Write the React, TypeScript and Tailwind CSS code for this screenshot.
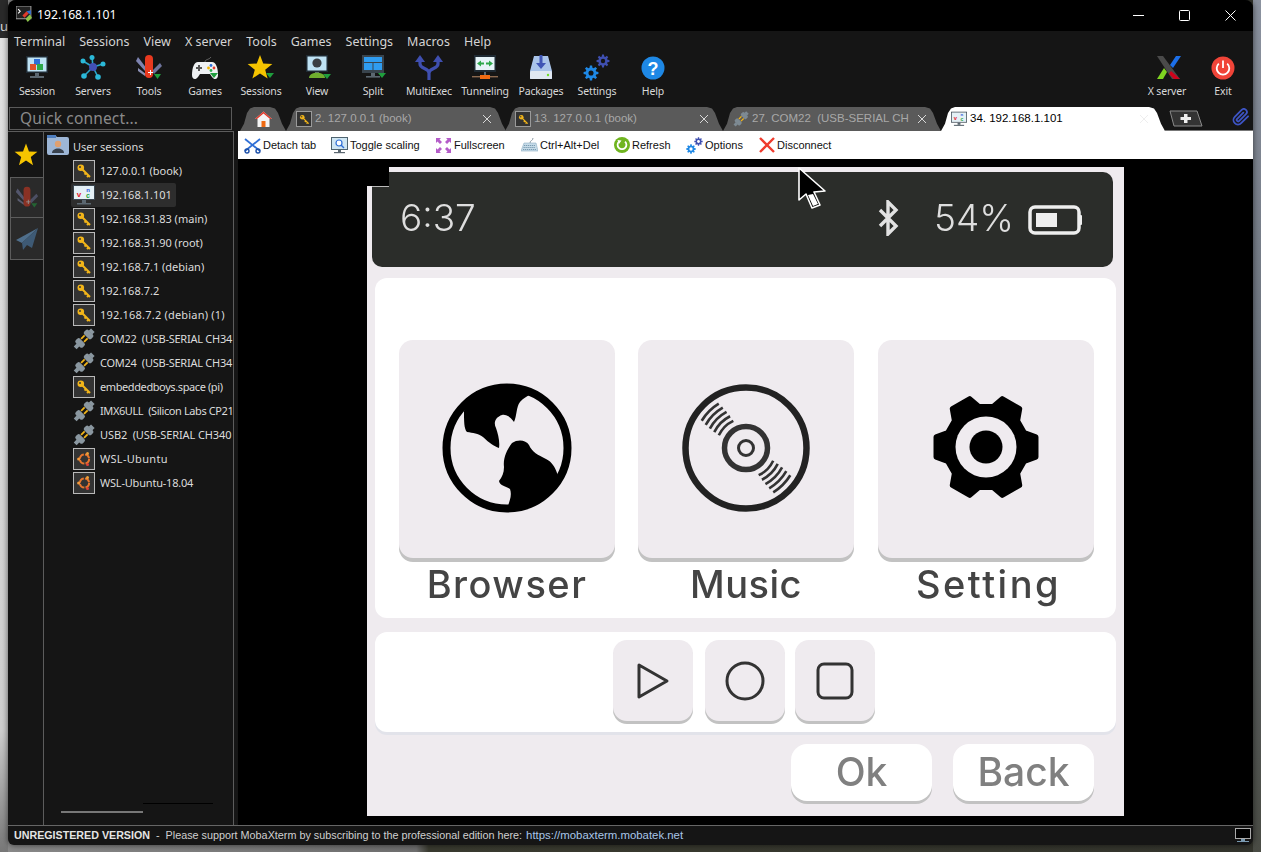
import React from "react";

const pt = (cx: number, cy: number, r: number, deg: number) => {
  const a = (deg * Math.PI) / 180;
  return [+(cx + r * Math.cos(a)).toFixed(2), +(cy + r * Math.sin(a)).toFixed(2)];
};

const gearPath = (c: number, ro: number, ri: number, n: number, start = 0) => {
  const step = 360 / n;
  const out: string[] = [];
  for (let i = 0; i < n; i++) {
    const t = start + i * step;
    const w = step * 0.19;
    const v = step * 0.34;
    [pt(c, c, ri, t - v), pt(c, c, ro, t - w), pt(c, c, ro, t + w), pt(c, c, ri, t + v)].forEach((p) => out.push(p.join(",")));
  }
  return "M" + out.join(" L") + " Z";
};

const arc = (c: number, r: number, a1: number, a2: number) => {
  const [x1, y1] = pt(c, c, r, a1);
  const [x2, y2] = pt(c, c, r, a2);
  return `M${x1} ${y1} A${r} ${r} 0 0 1 ${x2} ${y2}`;
};

const starPts = (c: number, cy: number, r: number) => {
  const p: string[] = [];
  for (let i = 0; i < 10; i++) p.push(pt(c, cy, i % 2 ? r * 0.42 : r, -90 + i * 36).join(","));
  return p.join(" ");
};

const Tri = () => <polygon points="19,19 27,19 23,24" fill="#1f9e3d" />;

const Svg = ({ children, s = 28 }: { children: React.ReactNode; s?: number }) => (
  <svg width={s} height={s} viewBox="0 0 28 28" className="block">{children}</svg>
);

const MiniGear = ({ x, y, r, fill, bg = "#151515" }: { x: number; y: number; r: number; fill: string; bg?: string }) => (
  <g transform={`translate(${x - r} ${y - r}) scale(${r / 10})`}>
    <path d={gearPath(10, 10, 7.2, 8)} fill={fill} />
    <circle cx="10" cy="10" r="3.4" fill={bg} />
  </g>
);

const Icons: Record<string, React.ReactNode> = {
  Session: (
    <Svg>
      <rect x="3" y="2" width="22" height="17" fill="#1f2a33" />
      <rect x="4.5" y="3.5" width="19" height="14" fill="#bfe3f5" />
      <rect x="11" y="5" width="6" height="6" fill="#2f6fd6" />
      <rect x="7" y="10" width="6" height="6" fill="#e0522a" />
      <rect x="14" y="10" width="6" height="6" fill="#2da84a" />
      <rect x="12" y="19" width="4" height="3" fill="#5b6770" />
      <rect x="7" y="22" width="14" height="2" fill="#5b6770" />
    </Svg>
  ),
  Servers: (
    <Svg>
      <g stroke="#2aa7c9" strokeWidth="1.6">
        <line x1="14" y1="13" x2="13" y2="3" />
        <line x1="14" y1="13" x2="4" y2="7" />
        <line x1="14" y1="13" x2="24" y2="10" />
        <line x1="14" y1="13" x2="5" y2="22" />
        <line x1="14" y1="13" x2="19" y2="23" />
      </g>
      <g fill="#2bb9d8">
        <circle cx="13" cy="3.5" r="2.5" /><circle cx="4" cy="7" r="2.5" /><circle cx="24" cy="10" r="2.5" />
        <circle cx="5" cy="22" r="2.8" /><circle cx="19" cy="23" r="2.8" />
      </g>
      <circle cx="14" cy="13" r="4" fill="#4150b5" />
    </Svg>
  ),
  Tools: (
    <Svg>
      <path d="M3 3 L12 15 L10 17 L1 7 Z" fill="#7d83b0" />
      <path d="M25 9 L17 17 L19 20 L27 12 Z" fill="#6e749c" />
      <path d="M3 14 L11 20 L10 22 L3 17 Z" fill="#8b8fb4" />
      <rect x="10" y="1" width="8" height="23" rx="4" fill="#e8391f" />
      <path d="M13 18h2v-2h1v2h2v1h-2v2h-1v-2h-2z" fill="#fff" />
      <polygon points="19,20 26,20 22.5,25" fill="#1f9e3d" />
    </Svg>
  ),
  Games: (
    <Svg>
      <path d="M7 8 H21 C25 8 27 14 27 21 C27 26 23 26 21 23 L19 20 H9 L7 23 C5 26 1 26 1 21 C1 14 3 8 7 8 Z" fill="#eef0f2" />
      <path d="M14 8 C14 5 18 6 20 3" stroke="#666" strokeWidth="1" fill="none" />
      <path d="M5 13h2v-2h2v2h2v2H9v2H7v-2H5z" fill="#555" />
      <circle cx="20" cy="11.5" r="1.4" fill="#2f6fd6" /><circle cx="23" cy="14" r="1.4" fill="#e0392a" />
      <circle cx="17.5" cy="14" r="1.4" fill="#f1b400" /><circle cx="20" cy="16.5" r="1.4" fill="#2da84a" />
      <Tri />
    </Svg>
  ),
  Sessions: (
    <Svg>
      <polygon points={starPts(13, 14, 13)} fill="#f5c400" />
      <Tri />
    </Svg>
  ),
  View: (
    <Svg>
      <rect x="3" y="1" width="22" height="17" fill="#1f2a33" />
      <rect x="4.5" y="2.5" width="19" height="14" fill="#bfe3f5" />
      <circle cx="14" cy="9" r="4.6" fill="#3a3f44" />
      <rect x="12" y="18" width="4" height="3" fill="#5b6770" />
      <path d="M6 24 C6 17 22 17 22 24 Z" fill="#6fae2e" />
      <polygon points="20,20 28,20 24,25" fill="#1f9e3d" />
    </Svg>
  ),
  Split: (
    <Svg>
      <rect x="3" y="1" width="22" height="18" fill="#39444d" />
      <rect x="5" y="3" width="18" height="5" fill="#2f9cf0" />
      <rect x="5" y="9" width="8.5" height="7" fill="#2f9cf0" />
      <rect x="14.5" y="9" width="8.5" height="7" fill="#2f9cf0" />
      <rect x="12" y="19" width="4" height="3" fill="#5b6770" />
      <rect x="7" y="22" width="14" height="1.6" fill="#5b6770" />
      <polygon points="19,19 27,19 23,24" fill="#1f9e3d" />
    </Svg>
  ),
  MultiExec: (
    <Svg>
      <path d="M5 6 V10 C5 15 14 14 14 19 V26 M23 6 V10 C23 15 14 14 14 19" stroke="#3f4fb0" strokeWidth="3.2" fill="none" />
      <polygon points="5,1 10,8 0,8" fill="#3f4fb0" />
      <polygon points="23,1 28,8 18,8" fill="#3f4fb0" />
    </Svg>
  ),
  Tunneling: (
    <Svg>
      <rect x="3" y="1" width="22" height="17" fill="#1f2a33" />
      <rect x="4.5" y="3" width="19" height="13" fill="#e6f3f8" />
      <path d="M6 9.5 L10 6.5 V8.5 H13 V10.5 H10 V12.5 Z M22 9.5 L18 6.5 V8.5 H15 V10.5 H18 V12.5 Z" fill="#2da84a" />
      <rect x="13" y="18" width="2" height="3" fill="#5b6770" />
      <rect x="1" y="22" width="26" height="1.4" fill="#8c6a50" />
      <rect x="9" y="21" width="10" height="4" fill="#f06a12" />
    </Svg>
  ),
  Packages: (
    <Svg>
      <path d="M7 2 H21 L25 17 V25 H3 V17 Z" fill="#a9c4ea" />
      <rect x="3" y="17" width="22" height="8" rx="1.5" fill="#e0e8f2" />
      <circle cx="21" cy="21" r="1.2" fill="#6fdc2e" />
      <path d="M12.5 1 H15.5 V9 H19 L14 15 L9 9 H12.5 Z" fill="#3f55b5" />
    </Svg>
  ),
  Settings: (
    <Svg>
      <MiniGear x={8} y={19} r={7.5} fill="#1e88e5" />
      <MiniGear x={20} y={7} r={6.5} fill="#3f4fb0" />
    </Svg>
  ),
  Help: (
    <Svg>
      <circle cx="14" cy="14" r="11.5" fill="#1e88e5" />
      <text x="14" y="20.5" textAnchor="middle" fontSize="18" fontWeight="700" fontFamily="'Liberation Sans', sans-serif" fill="#fff">?</text>
    </Svg>
  ),
  "X server": (
    <Svg>
      <polygon points="4,2 10,2 27,25 19,25" fill="#4a4a4a" />
      <polygon points="4,25 11,14 14,18 10,25" fill="#7ed321" />
      <polygon points="17,11 23,2 28,2 20,14" fill="#1c6fe8" />
      <polygon points="18,17 27,25 21,25 16,20" fill="#d0021b" />
    </Svg>
  ),
  Exit: (
    <Svg>
      <circle cx="14" cy="14" r="11.5" fill="#f04438" />
      <path d="M9.8 9.6 A6.3 6.3 0 1 0 18.2 9.6" stroke="#fff" strokeWidth="1.8" fill="none" />
      <line x1="14" y1="6.5" x2="14" y2="14" stroke="#fff" strokeWidth="1.8" />
    </Svg>
  ),
};

const ToolItem = ({ name }: { name: string }) => (
  <div className="flex w-[56px] shrink-0 flex-col items-center">
    <div className="flex h-[27px] items-center justify-center">{Icons[name]}</div>
    <span className="mt-[2px] whitespace-nowrap text-[10.5px] leading-[16px] tracking-[-0.15px] text-[#d8d8d8]">{name}</span>
  </div>
);

const KeyIcon = ({ s = 16 }: { s?: number }) => (
  <svg width={s} height={s} viewBox="0 0 16 16">
    <circle cx="4.8" cy="4.8" r="3.3" fill="#f2b519" />
    <circle cx="4" cy="4" r="1" fill="#3a3a3a" />
    <path d="M6 6 L14 14 M10 10 L8.5 11.5 M12.5 12.5 L11 14" stroke="#f2b519" strokeWidth="2" />
  </svg>
);

const KeyBox = () => (
  <div className="flex h-[22px] w-[22px] items-center justify-center border border-[#b9b9b9] bg-[#333]">
    <KeyIcon />
  </div>
);

const UbuntuBox = () => (
  <div className="flex h-[22px] w-[22px] items-center justify-center border border-[#b9b9b9] bg-[#333]">
    <svg width="16" height="16" viewBox="0 0 16 16">
      <circle cx="8.5" cy="8" r="4.6" fill="none" stroke="#e8762d" strokeWidth="2" strokeDasharray="6 1.2" />
      <circle cx="2.6" cy="8" r="1.5" fill="#f39a3c" />
      <circle cx="11.5" cy="2.6" r="1.5" fill="#f0a13a" />
      <circle cx="11.5" cy="13.4" r="1.5" fill="#e0403a" />
    </svg>
  </div>
);

const PlugIcon = ({ s = 22, c = "#8a97a0" }: { s?: number; c?: string }) => (
  <svg width={s} height={s} viewBox="0 0 22 22">
    <g transform="rotate(45 11 11)">
      <rect x="6" y="1.5" width="10" height="6" rx="2" fill={c} />
      <rect x="8.5" y="-1.5" width="5" height="3.5" fill={c} />
      <rect x="6" y="13.5" width="10" height="6" rx="2" fill={c} />
      <rect x="9" y="19" width="4" height="4.5" fill={c} />
      <rect x="8" y="8" width="1.8" height="5" fill="#f2b519" />
      <rect x="12.2" y="8" width="1.8" height="5" fill="#f2b519" />
    </g>
  </svg>
);

const VncIcon = ({ s = 22 }: { s?: number }) => (
  <svg width={s} height={s} viewBox="0 0 22 22" className="block">
    <rect x="0" y="1" width="22" height="15" fill="#3a4650" />
    <rect x="1" y="2" width="20" height="13" fill="#e4f0f6" />
    <text x="6" y="13" textAnchor="middle" fontSize="8" fontWeight="700" fontFamily="'Liberation Sans', sans-serif" fill="#e2172a">v</text>
    <text x="15" y="7.5" textAnchor="middle" fontSize="6" fontWeight="700" fontFamily="'Liberation Sans', sans-serif" fill="#2a55d8">n</text>
    <text x="15" y="14" textAnchor="middle" fontSize="7" fontWeight="700" fontFamily="'Liberation Sans', sans-serif" fill="#1ea33a">c</text>
    <rect x="9" y="16" width="4" height="3" fill="#5b6770" />
    <rect x="4" y="19" width="14" height="1.5" fill="#5b6770" />
  </svg>
);

type TreeKind = "key" | "vnc" | "plug" | "ubuntu";
const treeRows: { kind: TreeKind; label: string; selected?: boolean; track?: string }[] = [
  { kind: "key", label: "127.0.0.1 (book)" },
  { kind: "vnc", label: "192.168.1.101", selected: true },
  { kind: "key", label: "192.168.31.83 (main)" },
  { kind: "key", label: "192.168.31.90 (root)" },
  { kind: "key", label: "192.168.7.1 (debian)" },
  { kind: "key", label: "192.168.7.2" },
  { kind: "key", label: "192.168.7.2 (debian) (1)", track: "tracking-[0.2px]" },
  { kind: "plug", label: "COM22  (USB-SERIAL CH34", track: "tracking-[-0.25px]" },
  { kind: "plug", label: "COM24  (USB-SERIAL CH34", track: "tracking-[-0.25px]" },
  { kind: "key", label: "embeddedboys.space (pi)", track: "tracking-[-0.4px]" },
  { kind: "plug", label: "IMX6ULL  (Silicon Labs CP21", track: "tracking-[-0.4px]" },
  { kind: "plug", label: "USB2  (USB-SERIAL CH340", track: "tracking-[-0.1px]" },
  { kind: "ubuntu", label: "WSL-Ubuntu", track: "tracking-[0.3px]" },
  { kind: "ubuntu", label: "WSL-Ubuntu-18.04", track: "tracking-[-0.2px]" },
];

const TreeIcon = ({ kind }: { kind: TreeKind }) =>
  kind === "key" ? <KeyBox /> : kind === "vnc" ? <VncIcon /> : kind === "plug" ? <PlugIcon /> : <UbuntuBox />;

const tabShape =
  "[clip-path:polygon(0_100%,4px_70%,7px_25%,10px_6%,14px_0,calc(100%_-_16px)_0,calc(100%_-_11px)_6%,calc(100%_-_8px)_25%,calc(100%_-_4px)_70%,100%_100%)]";

const Tab = ({ icon, label, w }: { icon: React.ReactNode; label: string; w: string }) => (
  <div className={`relative flex h-[24px] shrink-0 items-center overflow-hidden bg-[#5a5a5a] pl-[8px] pr-[14px] ${w} ${tabShape}`}>
    <div className="ml-[2px] flex h-[16px] w-[16px] shrink-0 items-center justify-center">{icon}</div>
    <span className="ml-[3px] min-w-0 flex-1 overflow-hidden whitespace-pre font-['Liberation_Sans'] text-[11.5px] text-[#a8a8a8]">{label}</span>
    <svg width="10" height="10" viewBox="0 0 10 10" className="ml-[6px] shrink-0">
      <path d="M1 1 L9 9 M9 1 L1 9" stroke="#d8d8d8" strokeWidth="1" />
    </svg>
  </div>
);

const actions: { label: string; w: string; icon: React.ReactNode }[] = [
  {
    label: "Detach tab",
    w: "w-[87px]",
    icon: (
      <svg width="17" height="17" viewBox="0 0 17 17">
        <path d="M1 2 L16 14" stroke="#2f6fd6" strokeWidth="1.8" />
        <path d="M16 2 L1 14" stroke="#2f6fd6" strokeWidth="1.8" />
        <circle cx="3" cy="14" r="2" fill="none" stroke="#1c4fa8" strokeWidth="1.4" />
        <circle cx="14" cy="14" r="2" fill="none" stroke="#1c4fa8" strokeWidth="1.4" />
      </svg>
    ),
  },
  {
    label: "Toggle scaling",
    w: "w-[104px]",
    icon: (
      <svg width="17" height="17" viewBox="0 0 17 17">
        <rect x="0.5" y="0.5" width="16" height="12" fill="#cfe6f3" stroke="#4f6470" />
        <circle cx="8" cy="6" r="3" fill="#fff" stroke="#2f6fd6" strokeWidth="1.2" />
        <line x1="10" y1="8" x2="13" y2="11" stroke="#2f6fd6" strokeWidth="1.4" />
        <rect x="7" y="13" width="3" height="2" fill="#5b6770" />
        <rect x="3" y="15" width="11" height="1.2" fill="#5b6770" />
      </svg>
    ),
  },
  {
    label: "Fullscreen",
    w: "w-[86px]",
    icon: (
      <svg width="15" height="15" viewBox="0 0 15 15" fill="#b45cc8">
        <polygon points="0,0 5,0 3.5,1.5 6,4 4,6 1.5,3.5 0,5" />
        <polygon points="15,0 10,0 11.5,1.5 9,4 11,6 13.5,3.5 15,5" />
        <polygon points="0,15 5,15 3.5,13.5 6,11 4,9 1.5,11.5 0,10" />
        <polygon points="15,15 10,15 11.5,13.5 9,11 11,9 13.5,11.5 15,10" />
      </svg>
    ),
  },
  {
    label: "Ctrl+Alt+Del",
    w: "w-[92px]",
    icon: (
      <svg width="17" height="17" viewBox="0 0 17 17">
        <path d="M12 1 C12 4 9 3 9 6" stroke="#8a97a0" fill="none" />
        <path d="M3 6 H15 L17 14 H0 Z" fill="#c6dbe8" stroke="#8fb0c4" strokeWidth="0.6" />
        <path d="M3 8.5h11M2.5 10.5h12M2 12.5h13" stroke="#6f93aa" strokeWidth="0.9" strokeDasharray="1.3 0.7" />
      </svg>
    ),
  },
  {
    label: "Refresh",
    w: "w-[73px]",
    icon: (
      <svg width="16" height="16" viewBox="0 0 16 16">
        <circle cx="8" cy="8" r="8" fill="#6fb41f" />
        <path d="M5 4.6 A4.4 4.4 0 1 0 11 4.6" stroke="#fff" strokeWidth="1.8" fill="none" />
        <polygon points="3.5,3 7.5,3.4 5,7" fill="#fff" />
      </svg>
    ),
  },
  {
    label: "Options",
    w: "w-[72px]",
    icon: (
      <svg width="17" height="17" viewBox="0 0 17 17">
        <MiniGear x={5} y={12} r={4.8} fill="#1e88e5" bg="#ffffff" />
        <MiniGear x={12.5} y={4.5} r={4.2} fill="#3f4fb0" bg="#ffffff" />
      </svg>
    ),
  },
  {
    label: "Disconnect",
    w: "w-[80px]",
    icon: (
      <svg width="16" height="16" viewBox="0 0 16 16">
        <path d="M1 1 L15 15 M15 1 L1 15" stroke="#ef3b2d" strokeWidth="2.4" />
      </svg>
    ),
  },
];

const Globe = () => (
  <svg width="130" height="130" viewBox="0 0 130 130">
    <circle cx="65" cy="65" r="60.5" fill="#efebef" stroke="#000" strokeWidth="8" />
    <path
      d="M22 28 C22 38 22 46 25 49 C31 50 36 50 41 54 C47 60 52 63 57 65 C58 58 56 51 54 45 C51 39 54 34 60 32 C66 31 70 36 72 39 C75 33 74 24 78 19 C81 15 85 14 90 10 C80 3 60 0 44 6 C34 11 27 19 22 28 Z"
      fill="#000"
    />
    <path
      d="M57 98 C60 94 62 90 62 84 C61 76 64 68 70 60 C76 56 84 57 87 62 C90 69 96 72 104 76 C110 79 113 84 115 90 C118 94 110 110 98 117 C88 123 76 125 66 123 C68 117 70 112 68 106 C64 103 58 103 57 98 Z"
      fill="#000"
    />
  </svg>
);

const Disc = () => (
  <svg width="130" height="130" viewBox="0 0 130 130">
    <circle cx="65" cy="65" r="60.5" fill="none" stroke="#222" strokeWidth="6.5" />
    <circle cx="65" cy="65" r="21.5" fill="none" stroke="#333" strokeWidth="5.5" />
    <circle cx="65" cy="65" r="7.5" fill="none" stroke="#333" strokeWidth="3" />
    {[30, 35.5, 41, 46.5, 52].map((r) => (
      <g key={r} stroke="#333" strokeWidth="2.6" fill="none">
        <path d={arc(65, r, 205 + (r - 30) * 0.3, 245 - (r - 30) * 0.3)} />
        <path d={arc(65, r, 25 + (r - 30) * 0.3, 65 - (r - 30) * 0.3)} />
      </g>
    ))}
  </svg>
);

const Cog = () => (
  <svg width="110" height="110" viewBox="0 0 110 110">
    <path d={gearPath(55, 51, 41, 6)} fill="#000" stroke="#000" strokeWidth="5" strokeLinejoin="round" />
    <circle cx="55" cy="55" r="30.5" fill="#efebef" />
    <circle cx="55" cy="55" r="16.5" fill="#000" />
  </svg>
);

const AppBtn = ({ label, icon, mr, pad, track }: { label: string; icon: React.ReactNode; mr: string; pad: string; track: string }) => (
  <div className={`flex w-[216px] shrink-0 flex-col items-center ${mr}`}>
    <div className={`flex h-[218px] w-full items-start justify-center rounded-[14px] bg-[#efebef] shadow-[0_4px_0_#c2c2c2] ${pad}`}>{icon}</div>
    <span className={`mt-[1px] text-[38px] font-medium leading-[50px] text-[#444] ${track}`}>{label}</span>
  </div>
);

const SmallBtn = ({ children, mr }: { children: React.ReactNode; mr: string }) => (
  <div className={`flex h-[81px] w-[80px] items-center justify-center rounded-[14px] bg-[#efebef] shadow-[0_3px_0_#c2c2c2] ${mr}`}>{children}</div>
);

const WideBtn = ({ label }: { label: string }) => (
  <div className="flex h-[57px] w-[141px] items-center justify-center rounded-[16px] bg-white text-[39px] font-medium text-[#808080] shadow-[0_3px_0_#c2c2c2]">{label}</div>
);

export default function App() {
  const left = ["Session", "Servers", "Tools", "Games", "Sessions", "View", "Split", "MultiExec", "Tunneling", "Packages", "Settings", "Help"];
  const menu = ["Terminal", "Sessions", "View", "X server", "Tools", "Games", "Settings", "Macros", "Help"];
  const boxedKey = (
    <div className="flex h-[16px] w-[16px] items-center justify-center border border-[#9a9a9a] bg-[#333]">
      <KeyIcon s={11} />
    </div>
  );
  return (
    <div className="relative h-[852px] w-[1261px] overflow-hidden bg-[linear-gradient(90deg,#8a8a8a_0,#6f6f6f_33%,#3a3b30_34%,#34352d_100%)] font-['Noto_Sans']">
      {/* desktop behind the window */}
      <div className="absolute left-0 top-[38px] h-[814px] w-[8px] bg-[linear-gradient(180deg,#e2e2e2,#cfcfcf_85%,#777)]" />
      <div className="absolute left-0 top-0 h-[38px] w-[8px] bg-[#2a2a2a] text-[13px] leading-[52px] text-[#ddd]">u</div>
      <div className="absolute right-0 top-0 h-[852px] w-[8px] bg-[linear-gradient(180deg,#8c93a0,#6f7680_40%,#4a4c45)]" />

      <div className="absolute left-[8px] top-0 flex h-[845px] w-[1245px] flex-col overflow-hidden rounded-t-[8px] rounded-b-[6px] bg-[#151515] shadow-[0_0_6px_rgba(0,0,0,0.6)]">
        {/* title bar */}
        <div className="flex h-[31px] shrink-0 items-center bg-black pl-[8px]">
          <svg width="17" height="17" viewBox="0 0 16 16" className="mt-[-2px]">
            <rect x="0" y="0" width="14" height="12" fill="#222" stroke="#999" />
            <path d="M2 3 L4 5 L2 7" stroke="#fff" fill="none" />
            <polygon points="6,9 10,5 12,7 8,11" fill="#e0392a" />
            <polygon points="10,5 14,4 14,8 12,7" fill="#2f6fd6" />
            <polygon points="9,12 13,8 15,11 11,15" fill="#8bc34a" />
          </svg>
          <span className="ml-[4px] text-[12.2px] text-white">192.168.1.101</span>
          <div className="ml-auto flex items-center">
            <div className="flex h-[31px] w-[46px] items-center justify-center">
              <svg width="11" height="11" viewBox="0 0 11 11"><line x1="0" y1="5.5" x2="11" y2="5.5" stroke="#fff" /></svg>
            </div>
            <div className="flex h-[31px] w-[46px] items-center justify-center">
              <svg width="11" height="11" viewBox="0 0 11 11"><rect x="0.5" y="0.5" width="10" height="10" rx="1" fill="none" stroke="#fff" /></svg>
            </div>
            <div className="flex h-[31px] w-[46px] items-center justify-center">
              <svg width="11" height="11" viewBox="0 0 11 11"><path d="M0.5 0.5 L10.5 10.5 M10.5 0.5 L0.5 10.5" stroke="#fff" /></svg>
            </div>
          </div>
        </div>

        {/* menu */}
        <div className="flex h-[22px] shrink-0 items-center gap-[14px] pl-[6px] text-[12.5px] text-[#d4d4d4]">
          {menu.map((m, i) => (
            <span key={i}>{m}</span>
          ))}
        </div>

        {/* toolbar */}
        <div className="flex h-[54px] shrink-0 items-start pl-[1px] pt-[1px]">
          {left.map((n) => (
            <ToolItem key={n} name={n} />
          ))}
          <div className="ml-auto flex pr-[2px]">
            <ToolItem name="X server" />
            <ToolItem name="Exit" />
          </div>
        </div>

        {/* quick connect + tabs */}
        <div className="flex h-[24px] shrink-0 items-start">
          <div className="ml-[1px] flex h-[23px] w-[223px] shrink-0 items-center border border-[#5a5a5a] pl-[10px] text-[15.5px] tracking-[0.15px] text-[#8a8a8a]">Quick connect...</div>
          <div className="ml-[8px] flex min-w-0 flex-1 items-start">
            <div className={`flex h-[24px] w-[46px] shrink-0 items-center justify-center bg-[#5a5a5a] ${tabShape}`}>
              <svg width="17" height="17" viewBox="0 0 17 17">
                <polygon points="8.5,0.5 17,8 14.5,8 14.5,16 2.5,16 2.5,8 0,8" fill="#f4f4f4" />
                <polygon points="8.5,0.5 17,8 15,8 8.5,2.5 2,8 0,8" fill="#e0392a" />
                <rect x="6.5" y="10" width="4" height="6" fill="#f06a12" />
              </svg>
            </div>
            <Tab icon={boxedKey} label="2. 127.0.0.1 (book)" w="w-[220px]" />
            <Tab icon={boxedKey} label="13. 127.0.0.1 (book)" w="w-[218px] -ml-[1px]" />
            <Tab icon={<PlugIcon s={16} c="#7d8a93" />} label="27. COM22  (USB-SERIAL CH" w="w-[218px]" />
            <div className={`flex h-[24px] w-[224px] shrink-0 items-center bg-white pl-[10px] pr-[16px] ${tabShape}`}>
              <VncIcon s={16} />
              <span className="ml-[3px] flex-1 whitespace-nowrap font-['Liberation_Sans'] text-[11.5px] text-black">34. 192.168.1.101</span>
              <svg width="10" height="10" viewBox="0 0 10 10"><path d="M1 1 L9 9 M9 1 L1 9" stroke="#eee" /></svg>
            </div>
            <div className="flex h-[24px] min-w-0 flex-1 items-start border-b border-[#777] pl-[4px]">
              <svg width="34" height="17" viewBox="0 0 34 17" className="mt-[3px] shrink-0">
                <polygon points="1,1 28,1 33,16 5,16" fill="#333" stroke="#8a8a8a" />
                <path d="M15 4h3.5v3h3.5v3h-3.5v3H15v-3h-3.5V7H15z" fill="#eee" />
              </svg>
              <svg width="18" height="18" viewBox="0 0 24 24" className="ml-[29px] mt-[1px] shrink-0" fill="none" stroke="#3d54c4" strokeWidth="2.4" strokeLinecap="round">
                <path d="M21.4 11.1 12.2 20.3a6 6 0 0 1-8.5-8.5l9.2-9.2a4 4 0 0 1 5.7 5.7l-9.2 9.2a2 2 0 0 1-2.8-2.8l8.5-8.5" />
              </svg>
            </div>
          </div>
        </div>

        {/* body */}
        <div className="flex min-h-0 flex-1">
          {/* sidebar */}
          <div className="relative flex w-[226px] shrink-0 border-r border-t border-[#5c5c5c]">
            <div className="flex w-[35px] shrink-0 flex-col">
              <div className="flex h-[45px] items-center justify-center">
                <svg width="24" height="24" viewBox="0 0 24 24"><polygon points={starPts(12, 12.5, 12)} fill="#f5c400" /></svg>
              </div>
              <div className="ml-[2px] flex h-[41px] w-[33px] items-center justify-center border border-r-0 border-[#5c5c5c] bg-[#2a2a2a]">
                <div className="opacity-50"><Svg s={24}>{Icons.Tools}</Svg></div>
              </div>
              <div className="ml-[2px] flex h-[42px] w-[33px] items-center justify-center border border-r-0 border-t-0 border-[#5c5c5c] bg-[#2a2a2a]">
                <svg width="24" height="24" viewBox="0 0 24 24">
                  <polygon points="23,1 1,13 7,16" fill="#4f6f8c" />
                  <polygon points="23,1 7,16 8,23 12,18 17,21" fill="#3e5a75" />
                </svg>
              </div>
            </div>
            <div className="min-w-0 flex-1 overflow-hidden border-l border-[#5c5c5c]">
              <div className="flex h-[27px] items-center pl-[3px] pt-[3px]">
                <svg width="22" height="20" viewBox="0 0 22 20" className="-mt-[4px]">
                  <path d="M0 2 Q0 0 2 0 H8 L10 2 H20 Q22 2 22 4 V18 Q22 20 20 20 H2 Q0 20 0 18 Z" fill="#9db6d6" />
                  <rect x="0" y="0" width="9" height="3" fill="#4f7fc0" />
                  <circle cx="11" cy="9" r="3.2" fill="#e0a070" />
                  <path d="M5 18 C5 12 17 12 17 18 Z" fill="#39424e" />
                </svg>
                <span className="ml-[4px] whitespace-nowrap text-[11px] text-[#d8d8d8]">User sessions</span>
              </div>
              <div className="flex flex-col">
                {treeRows.map((r) => (
                  <div key={r.label} className="flex h-[24px] items-center whitespace-pre pl-[29px] text-[11px] text-[#dcdcdc]">
                    <div className={`flex h-[24px] items-center ${r.selected ? "-ml-[2px] rounded-[2px] bg-[#2d2d2d] pl-[2px] pr-[4px]" : ""}`}>
                      <div className="flex h-[22px] w-[22px] shrink-0 items-center justify-center"><TreeIcon kind={r.kind} /></div>
                      <span className={`ml-[5px] ${r.track ?? ""}`}>{r.label}</span>
                    </div>
                  </div>
                ))}
              </div>
            </div>
            <div className="absolute bottom-[12px] left-[53px] h-[2px] w-[82px] bg-[#777]" />
            <div className="absolute bottom-[21px] left-[135px] h-[1px] w-[70px] bg-black" />
          </div>

          {/* content */}
          <div className="ml-[4px] flex min-w-0 flex-1 flex-col">
            <div className="flex h-[28px] shrink-0 items-center bg-white pl-[6px] text-[#111]">
              {actions.map((a) => (
                <div key={a.label} className={`flex shrink-0 items-center ${a.w}`}>
                  <div className="flex w-[17px] shrink-0 items-center justify-center">{a.icon}</div>
                  <span className="ml-[2px] whitespace-nowrap font-['Liberation_Sans'] text-[11px]">{a.label}</span>
                </div>
              ))}
            </div>
            <div className="min-h-0 flex-1 bg-black pl-[129px] pt-[8px]">
              {/* remote screen */}
              <div className="relative h-[649px] w-[757px] overflow-hidden bg-[#efebef] pl-[5px] pt-[5px] font-['Inter'] [filter:blur(0.6px)]">
                <div className="absolute left-0 top-0 z-10 h-[19px] w-[22px] bg-black" />
                <div className="absolute left-[5px] top-[19px] z-10 h-[1px] w-[17px] bg-[#bbb]" />
                <div className="flex h-[95px] w-[741px] items-center rounded-[10px] bg-[#2b2d2a] pb-[3px] pl-[28px] pr-[30px] text-[37px] font-[350] text-[#dedede]">
                  <span>6:37</span>
                  <svg width="24" height="36" viewBox="0 0 24 36" className="ml-auto">
                    <path d="M4 10 L20 26 L12 34 V2 L20 10 L4 26" fill="none" stroke="#e2e2e2" strokeWidth="3.4" />
                  </svg>
                  <span className="ml-[34px]">54%</span>
                  <svg width="55" height="30" viewBox="0 0 55 30" className="ml-[14px] mt-[3px]">
                    <rect x="2" y="2" width="49" height="26" rx="5" fill="none" stroke="#eee" strokeWidth="3.5" />
                    <rect x="8" y="8" width="21" height="14" fill="#eee" />
                    <rect x="51" y="10" width="3" height="10" rx="1" fill="#eee" />
                  </svg>
                </div>
                <div className="ml-[3px] mt-[11px] h-[340px] w-[741px] rounded-[12px] bg-white pl-[24px] pt-[62px]">
                  <div className="flex">
                    <AppBtn label="Browser" icon={<Globe />} mr="mr-[23px]" pad="pt-[43px]" track="tracking-[1.5px]" />
                    <AppBtn label="Music" icon={<Disc />} mr="mr-[24px]" pad="pt-[43px]" track="tracking-[0.5px]" />
                    <AppBtn label="Setting" icon={<Cog />} mr="" pad="pt-[52px]" track="pl-[5px] tracking-[2.5px]" />
                  </div>
                </div>
                <div className="ml-[3px] mt-[14px] flex h-[100px] w-[741px] rounded-[12px] bg-white pl-[238px] pt-[8px] shadow-[0_3px_0_#e2e3ea]">
                  <SmallBtn mr="mr-[12px]">
                    <svg width="34" height="38" viewBox="0 0 34 38"><polygon points="3,3 31,19 3,35" fill="none" stroke="#333" strokeWidth="3" strokeLinejoin="round" /></svg>
                  </SmallBtn>
                  <SmallBtn mr="mr-[10px]">
                    <svg width="40" height="40" viewBox="0 0 40 40"><circle cx="20" cy="20" r="18" fill="none" stroke="#333" strokeWidth="3" /></svg>
                  </SmallBtn>
                  <SmallBtn mr="">
                    <svg width="38" height="38" viewBox="0 0 38 38"><rect x="2" y="2" width="34" height="34" rx="6" fill="none" stroke="#333" strokeWidth="3" /></svg>
                  </SmallBtn>
                </div>
                <div className="ml-[419px] mt-[12px] flex gap-[21px]">
                  <WideBtn label="Ok" />
                  <WideBtn label="Back" />
                </div>
                {/* remote mouse pointer */}
                <svg width="31" height="44" viewBox="0 0 31 44" className="absolute left-[430px] top-0 z-20">
                  <path d="M2 1 V33 L9 27 L15 41 L23 38 L17 25 L28 24 Z" fill="#000" stroke="#fff" strokeWidth="1.6" strokeLinejoin="round" />
                  <path d="M11 28 L16 39 L21 37 L16 27 Z" fill="#fff" />
                </svg>
              </div>
            </div>
          </div>
        </div>

        {/* status bar */}
        <div className="flex h-[20px] shrink-0 items-center border-t border-[#666] pl-[6px] pr-[2px] font-['Liberation_Sans'] text-[#d0d0d0]">
          <span className="text-[10.7px] font-bold text-[#e4e4e4]">UNREGISTERED VERSION</span>
          <span className="ml-[6px] whitespace-pre text-[10.8px]">-  Please support MobaXterm by subscribing to the professional edition here:</span>
          <span className="ml-[4px] text-[11.4px] text-[#a9c6e8]">https://mobaxterm.mobatek.net</span>
          <svg width="16" height="15" viewBox="0 0 16 15" className="ml-auto">
            <rect x="0.5" y="0.5" width="15" height="10" fill="#000" stroke="#aaa" />
            <rect x="6" y="11" width="4" height="2" fill="#7a9ab0" />
            <rect x="2" y="13" width="12" height="1" fill="#7a9ab0" />
          </svg>
        </div>
      </div>
    </div>
  );
}
